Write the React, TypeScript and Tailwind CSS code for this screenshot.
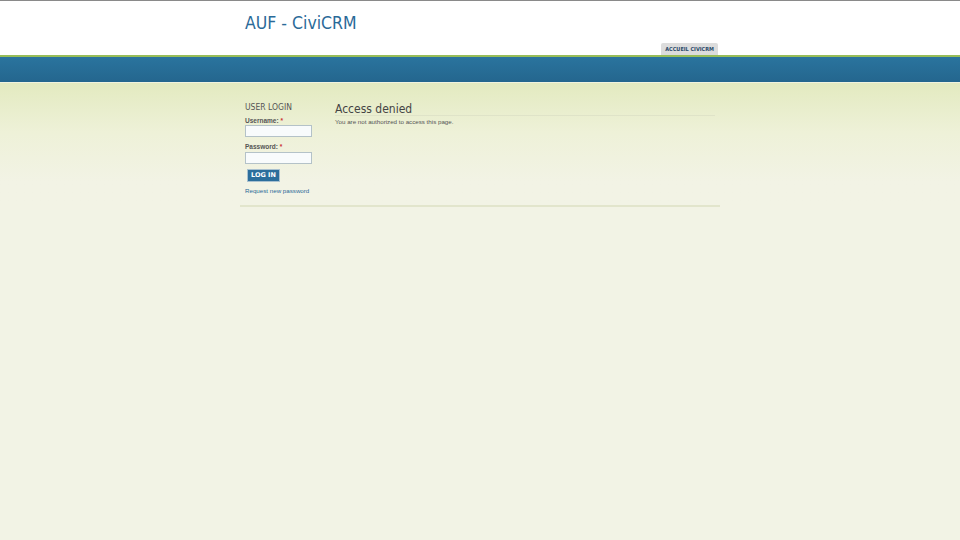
export default function App() {
  return (
    <div className="min-h-screen bg-[#f2f3e5] font-['DejaVu_Sans',sans-serif]">
      <div className="h-px bg-[#8a8a8a]" />
      <div className="bg-white">
        <div className="mx-auto w-[480px] h-[54px] relative">
          <h1 className="pl-[5px] pt-[11px] text-[17.5px] leading-[22px] text-[#2a6a98] font-['DejaVu_Sans_Condensed','DejaVu_Sans',sans-serif]">
            AUF - CiviCRM
          </h1>
          <div className="absolute right-[2px] bottom-0 h-[12px] px-[4px] bg-[#dcdcdc] rounded-t-[2px] text-[5.5px] leading-[13px] font-bold text-[#2a4a6a] font-['DejaVu_Sans_Condensed',sans-serif]">
            ACCUEIL CIVICRM
          </div>
        </div>
      </div>
      <div className="h-[2px] bg-[#97bd58]" />
      <div className="h-[25px] bg-gradient-to-b from-[#2a749e] to-[#24668e]" />
      <div className="h-px bg-[#f0f3df]" />
      <div className="bg-gradient-to-b from-[#e3eac0] via-[#eef1d8] via-40% to-[#f2f3e5] to-80%">
        <div className="mx-auto w-[480px] pt-[20px] flex">
          <div className="w-[95px] pl-[5px]">
            <h2 className="text-[8.5px] leading-[9px] text-[#555] uppercase font-['DejaVu_Sans_Condensed',sans-serif]">User login</h2>
            <form className="font-['Liberation_Sans',sans-serif]">
              <label className="block mt-[5px] text-[6.5px] leading-[8px] font-bold text-[#555]">
                Username: <span className="text-[#c33]">*</span>
              </label>
              <div className="w-[67px] h-[12px] border border-[#b4c2c8] bg-[#f8fbfc]" />
              <label className="block mt-[5px] text-[6.5px] leading-[9px] font-bold text-[#555]">
                Password: <span className="text-[#c33]">*</span>
              </label>
              <div className="mt-[1px] w-[67px] h-[12px] border border-[#b4c2c8] bg-[#f8fbfc]" />
              <div className="mt-[5px] ml-[2px] w-[33px] h-[13px] border border-[#a9c1d0] bg-[#2c6e9c] text-white text-[6.5px] leading-[11px] font-bold text-center font-['DejaVu_Sans',sans-serif]">
                LOG IN
              </div>
              <a className="block mt-[4px] text-[6.2px] leading-[10px] text-[#2a6a98]">Request new password</a>
            </form>
          </div>
          <div className="flex-1 pr-[5px]">
            <h2 className="text-[12px] leading-[12px] text-[#444] font-['DejaVu_Sans_Condensed','DejaVu_Sans',sans-serif] border-b border-[#dfe3c8]">
              Access denied
            </h2>
            <p className="mt-[2px] text-[6.2px] leading-[8px] text-[#555] font-['Liberation_Sans',sans-serif]">
              You are not authorized to access this page.
            </p>
          </div>
        </div>
        <div className="mx-auto w-[480px] mt-[9px] h-[2px] bg-[#e2e5cc]" />
      </div>
    </div>
  );
}
